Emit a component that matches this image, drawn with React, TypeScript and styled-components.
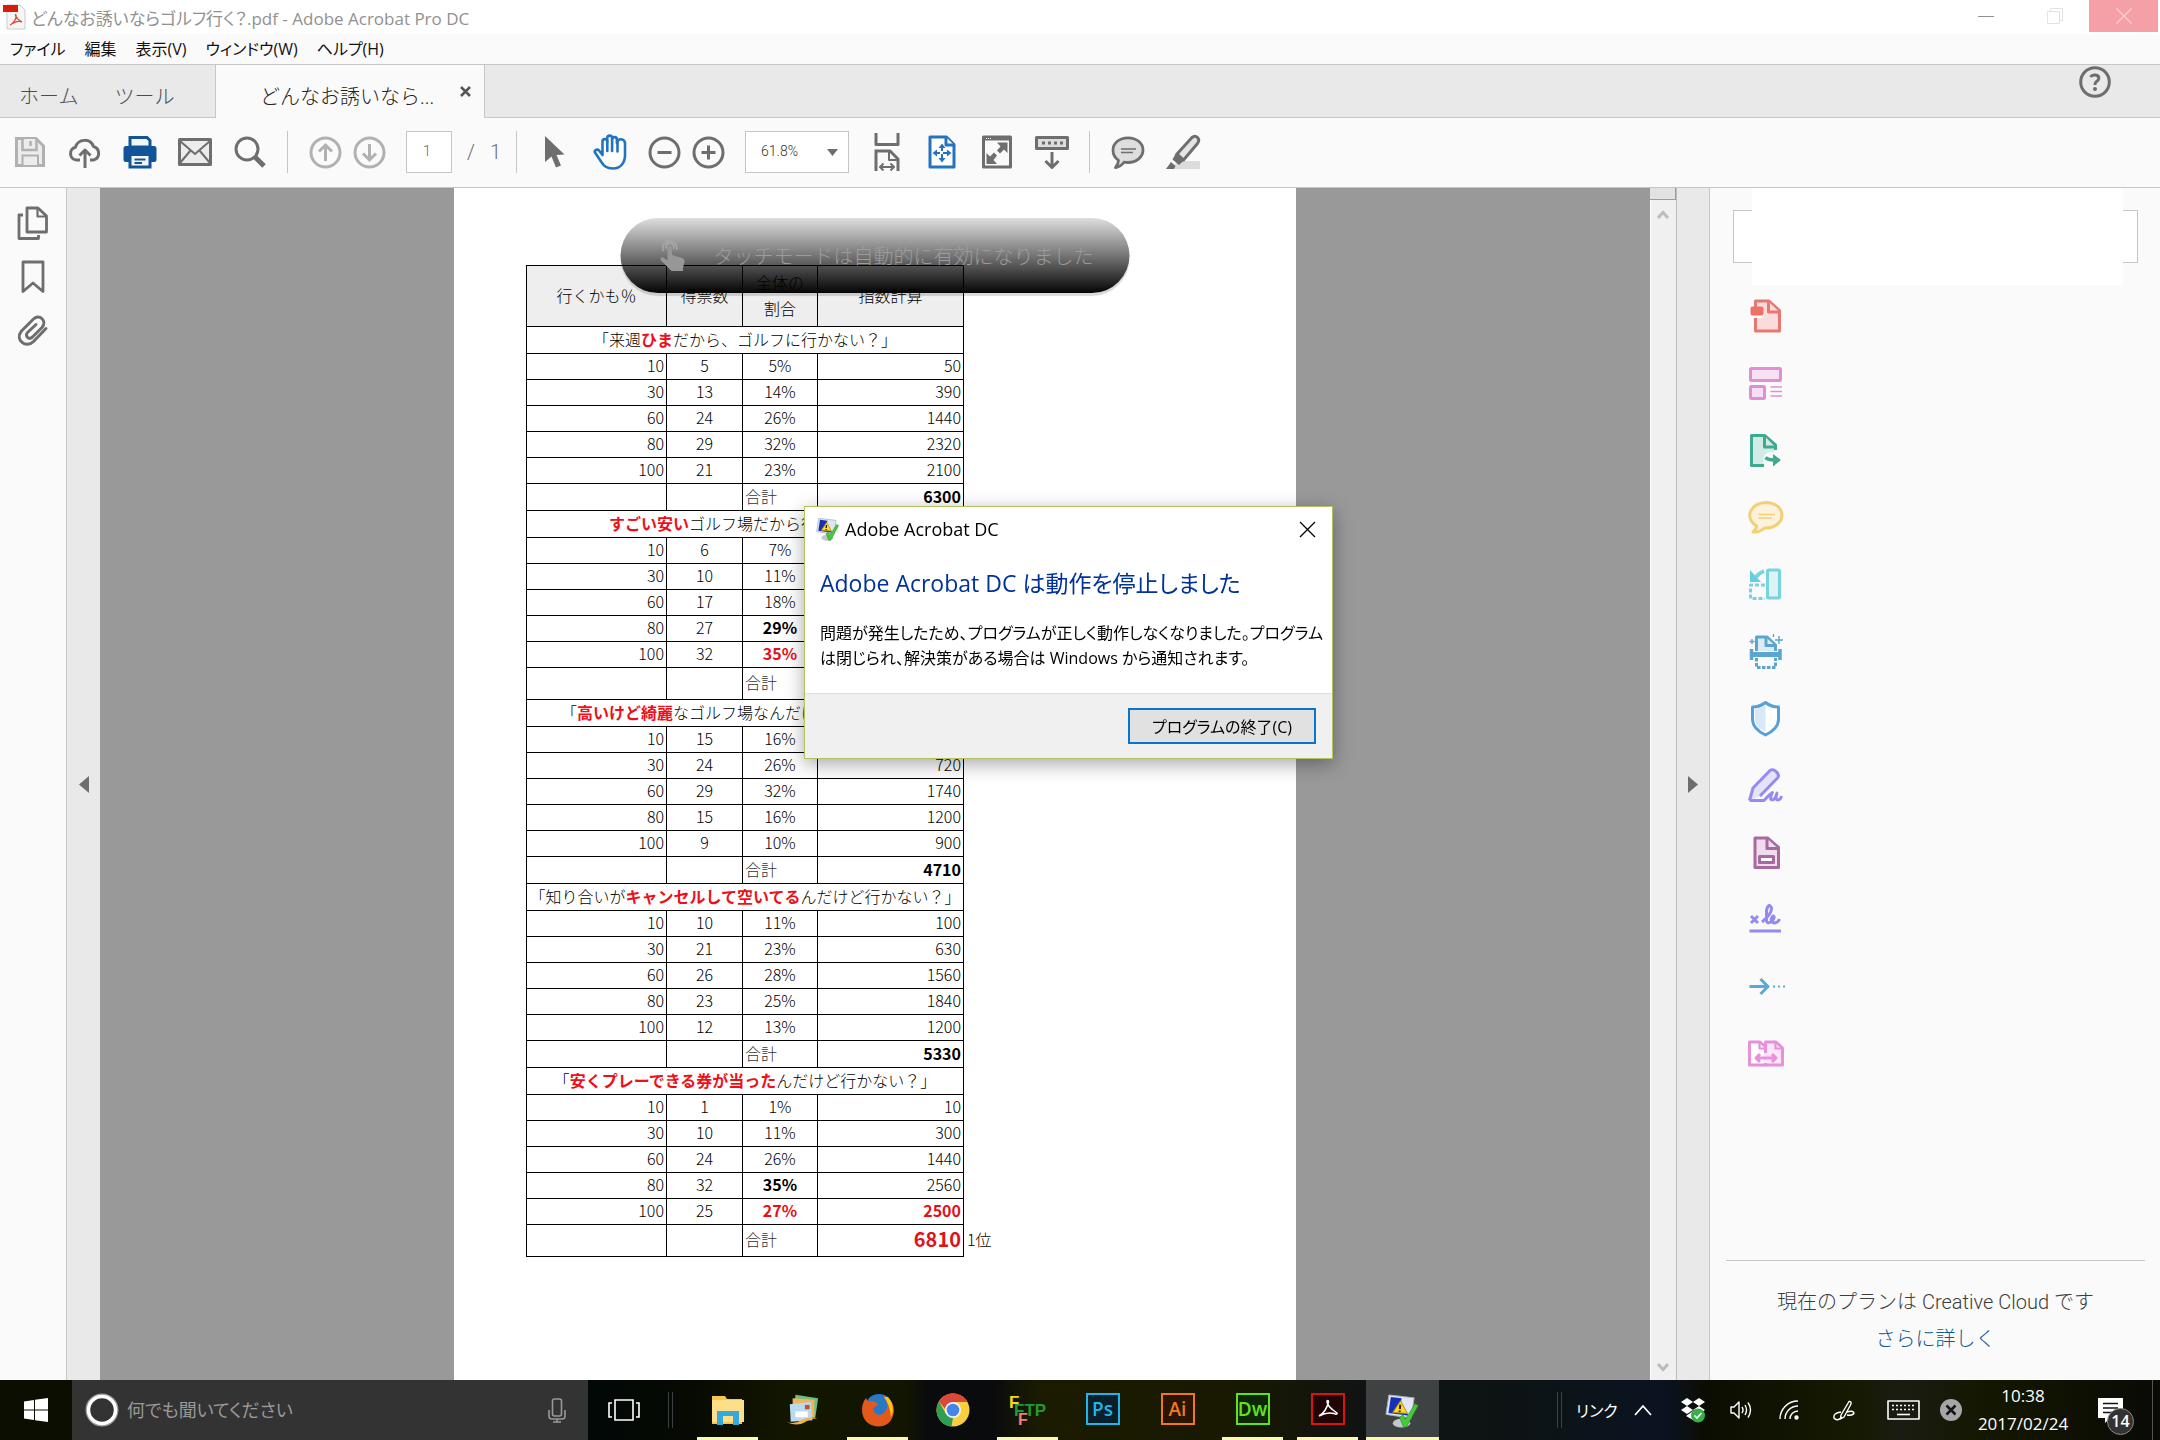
import React from "react";
import styled, { createGlobalStyle, css } from "styled-components";

const UI = `"Open Sans", "Noto Sans CJK JP", sans-serif`;
const JP = `"Noto Sans CJK JP", sans-serif`;
const SANS = `Roboto, "Noto Sans CJK JP", sans-serif`;
const LINE = "#c6c6c6";
const GREY = "#6e6e6e";

const Global = createGlobalStyle`
  *, *::before, *::after { box-sizing: border-box; }
  body { margin: 0; background: #fff; font-family: ${UI}; }
  button, input, select { font: inherit; color: inherit; margin: 0; }
  svg { display: block; flex: none; }
`;

const Desktop = styled.div`
  display: flex;
  flex-direction: column;
  height: 100vh;
  overflow: hidden;
  background: #fafafa;
`;

const BareButton = styled.button`
  display: flex;
  align-items: center;
  justify-content: center;
  padding: 0;
  border: 0;
  background: none;
  cursor: pointer;
`;

/* ---------- window chrome ---------- */

const TitleBar = styled.header`
  display: flex;
  flex: none;
  height: 34px;
  padding: 0 2px 0 3px;
  background: #fff;
  color: #919191;
`;

const TitleText = styled.h1`
  display: flex;
  flex: 1;
  align-items: center;
  gap: 5px;
  margin: 0;
  font-size: 17px;
  font-weight: 400;
  font-feature-settings: "palt";
`;

const WindowButton = styled(BareButton)<{ $close?: boolean }>`
  width: 69px;
  height: 32px;
  background: ${(p) => (p.$close ? "#f5a0a6" : "transparent")};
`;

const MenuBar = styled.nav`
  display: flex;
  flex: none;
  gap: 19px;
  height: 30px;
  padding: 0 10px 2px;
`;

const MenuItem = styled(BareButton)`
  font-size: 16px;
  font-feature-settings: "palt";
  color: #111;
`;

const TabBar = styled.div`
  display: flex;
  flex: none;
  height: 54px;
  border-top: 1px solid ${LINE};
  background: #e9e9e9;
`;

const TabFill = styled.div`
  display: flex;
  flex: 1;
  justify-content: flex-end;
  padding: 1px 49px 0 0;
  border-bottom: 1px solid ${LINE};
`;

const HomeTabs = styled.div`
  display: flex;
  gap: 36px;
  width: 215px;
  padding: 8px 0 0 19px;
  border-bottom: 1px solid ${LINE};
`;

const TabButton = styled(BareButton)`
  font-family: ${SANS};
  font-size: 20px;
  font-weight: 300;
  color: #4b4b4b;
`;

const ActiveTab = styled.div`
  display: flex;
  align-items: center;
  justify-content: space-between;
  width: 270px;
  padding: 0 13px 0 44px;
  border: solid ${LINE};
  border-width: 0 1px;
  background: #fafafa;
`;

const ActiveTabButton = styled(TabButton)`
  padding-top: 8px;
  color: #222;
`;

const TabClose = styled(BareButton)`
  color: #555;
`;

const HelpButton = styled(BareButton)`
  width: 32px;
  height: 32px;
  color: ${GREY};
`;

/* ---------- toolbar ---------- */

const Toolbar = styled.div`
  display: flex;
  flex: none;
  align-items: center;
  height: 70px;
  padding: 0 0 1px 2px;
  border-bottom: 1px solid ${LINE};
  color: ${GREY};
`;

const ToolButton = styled(BareButton)`
  width: 55px;
  height: 42px;
`;

const Pair = styled.div`
  display: flex;
  padding: 0 5px;
  & > button { width: 44px; }
`;

const Divider = styled.span`
  width: 1px;
  height: 42px;
  margin: 0 10px;
  background: ${LINE};
`;

const PageLabel = styled.label`
  display: flex;
  align-items: center;
  gap: 15px;
  width: 100px;
  margin-left: 10px;
  font-family: ${SANS};
  font-size: 20px;
  font-weight: 300;
`;

const PageInput = styled.input`
  flex: none;
  width: 46px;
  height: 42px;
  padding: 0 4px 2px 0;
  border: 1px solid ${LINE};
  background: #fff;
  font-size: 15px;
  text-align: center;
`;

const ZoomBox = styled.div`
  position: relative;
  margin: 0 10px;
`;

const ZoomSelect = styled.select`
  display: block;
  width: 104px;
  height: 42px;
  padding: 0 0 2px 15px;
  border: 1px solid ${LINE};
  border-radius: 0;
  background: #fff;
  appearance: none;
  font-family: ${SANS};
  font-size: 14px;
  font-weight: 300;
  color: #333;
`;

const SelectArrow = styled.svg`
  position: absolute;
  top: 18px;
  right: 11px;
  pointer-events: none;
`;

/* ---------- workspace ---------- */

const Workspace = styled.main`
  display: flex;
  flex: 1;
  min-height: 0;
`;

const Rail = styled.nav`
  display: flex;
  flex: none;
  flex-direction: column;
  width: 67px;
  padding-top: 8px;
  border-right: 1px solid ${LINE};
  color: ${GREY};
  & > button { height: 54px; }
`;

const Splitter = styled(BareButton)<{ $side: "left" | "right" }>`
  flex: none;
  width: 33px;
  background: #e9e9e9;
  ${(p) => p.$side === "right" && css`
    border-right: 1px solid ${LINE};
  `}
`;

const Canvas = styled.section`
  position: relative;
  display: flex;
  flex: 1;
  justify-content: center;
  overflow: hidden;
  background: #999;
`;

const Paper = styled.article`
  width: 842px;
  padding: 77px 72px 0;
  background: #fff;
`;

const ScrollBar = styled.div`
  display: flex;
  flex: none;
  flex-direction: column;
  align-items: center;
  justify-content: space-between;
  width: 27px;
  padding-bottom: 8px;
  border: solid #bdbdbd;
  border-width: 0 1px 0 0;
  box-shadow: inset 1px 0 #fff;
  background: #f0f0f0;
`;

const ScrollTop = styled.div`
  display: flex;
  flex-direction: column;
  align-items: center;
  gap: 10px;
  width: 100%;
`;

const ScrollThumb = styled.div`
  width: 100%;
  height: 12px;
  border: solid #9c9c9c;
  border-width: 0 1px 1px 0;
  background: #e2e2e2;
`;

/* ---------- survey table ---------- */

const Survey = styled.table`
  width: 478px;
  table-layout: fixed;
  border-collapse: collapse;
  font-family: ${JP};
  font-size: 16px;
  font-weight: 300;
  line-height: 20px;
  color: #000;
`;

type CellProps = { $align?: string; $tone?: "bold" | "red" | "mute"; $big?: boolean };

const Row = styled.tr<{ $h: number }>`
  height: ${(p) => p.$h}px;
`;

const Cell = styled.td<CellProps>`
  padding: 0 2px 3px;
  border: 1px solid #000;
  text-align: ${(p) => p.$align ?? "right"};
  white-space: nowrap;
  ${(p) => p.$tone === "bold" && css`font-weight: 700;`}
  ${(p) => p.$tone === "red" && css`font-weight: 700; color: #e11219;`}
  ${(p) => p.$tone === "mute" && css`color: #333;`}
  ${(p) => p.$big && css`font-size: 20px;`}
`;

const HeadCell = styled.th`
  padding: 0 0 3px;
  border: 1px solid #000;
  background: #eee;
  font-weight: 300;
  line-height: 26px;
`;

const Rank = styled.td`
  padding: 0 0 3px 3px;
  white-space: nowrap;
`;

const Hot = styled.strong`
  font-weight: 700;
  color: #ee1018;
`;

/* ---------- toast ---------- */

const Toast = styled.div`
  position: absolute;
  top: 30px;
  left: 50%;
  display: flex;
  align-items: center;
  gap: 28px;
  width: 509px;
  height: 75px;
  padding-left: 39px;
  border-radius: 38px;
  transform: translateX(-50%);
  background: linear-gradient(rgba(0, 0, 0, 0.13), rgba(0, 0, 0, 0.54) 50%, rgba(0, 0, 0, 0.98));
  box-shadow: 0 3px 1px rgba(0, 0, 0, 0.15);
  font-family: ${JP};
  font-size: 20px;
  font-weight: 300;
  color: #9c9c9c;
  white-space: nowrap;
`;

/* ---------- tools pane ---------- */

const ToolsPane = styled.aside`
  display: flex;
  flex: none;
  flex-direction: column;
  width: 450px;
`;

const SearchArea = styled.div`
  position: relative;
  height: 95px;
  padding: 22px 22px 0 23px;
`;

const SearchInput = styled.input`
  display: block;
  width: 100%;
  height: 53px;
  padding: 0 20px;
  border: 1px solid ${LINE};
  background: #fff;
`;

const SearchCover = styled.div`
  position: absolute;
  inset: 0 37px 0 42px;
  height: 97px;
  background: #fff;
`;

const ToolList = styled.nav`
  display: flex;
  flex: 1;
  flex-direction: column;
  align-items: flex-start;
  padding-left: 36px;
`;

const PaneTool = styled(BareButton)`
  width: 40px;
  height: 67px;
`;

const Plan = styled.footer`
  margin: 0 15px 0 16px;
  padding: 23px 0 22px;
  border-top: 1px solid ${LINE};
  font-family: ${SANS};
  font-size: 20px;
  font-weight: 300;
  line-height: 37px;
  text-align: center;
  color: #3c3c3c;
`;

const PlanText = styled.p`
  margin: 0;
`;

const PlanLink = styled.a`
  color: #0a5a92;
  text-decoration: none;
`;

/* ---------- crash dialog ---------- */

const Dialog = styled.section`
  position: fixed;
  top: 506px;
  left: 804px;
  width: 529px;
  border: 1px solid #b3c25a;
  background: #fff;
  box-shadow: 0 5px 18px rgba(0, 0, 0, 0.35);
  color: #000;
`;

const DialogTitle = styled.div`
  display: flex;
  align-items: center;
  gap: 5px;
  height: 44px;
  padding: 0 16px 0 11px;
  font-size: 18px;
  & > button { margin-left: auto; }
`;

const DialogBody = styled.div`
  height: 142px;
  padding: 14px 0 0 15px;
  font-feature-settings: "palt";
`;

const DialogHeading = styled.h2`
  margin: 0 0 20px;
  font-size: 23px;
  font-weight: 400;
  line-height: 36px;
  color: #003399;
`;

const DialogText = styled.p`
  margin: 0;
  font-size: 16px;
  line-height: 25px;
  white-space: nowrap;
`;

const DialogFooter = styled.div`
  display: flex;
  justify-content: flex-end;
  padding: 14px 16px;
  border-top: 1px solid #dfdfdf;
  background: #f0f0f0;
`;

const EndButton = styled.button`
  width: 188px;
  height: 36px;
  padding: 0;
  border: 2px solid #0a74c9;
  background: #e1e1e1;
  font-size: 16px;
  font-feature-settings: "palt";
`;

/* ---------- taskbar ---------- */

const Taskbar = styled.footer`
  display: flex;
  flex: none;
  align-items: stretch;
  height: 60px;
  color: #fff;
  background:
    linear-gradient(90deg, #0b0e00 0, #0b0e00 72px, #020807 600px, #070a02 32%, #121500 36%, #121502 42%, #090b0e 43%, #0a0b0c 46%, #1a1b00 48%, #181900 57%, #101312 63%, #0d1314 70%, #0b1322 77%, #0c0d02 79%, #171a02 86%, #1b1c12 88%, #141700 92%, #0a0a06 100%);
`;

const StartButton = styled(BareButton)`
  width: 72px;
`;

const Cortana = styled.label`
  display: flex;
  align-items: center;
  gap: 8px;
  width: 516px;
  padding: 0 22px 0 13px;
  background: #333;
`;

const CortanaInput = styled.input`
  flex: 1;
  min-width: 0;
  padding: 0;
  border: 0;
  outline: 0;
  background: none;
  font-size: 18px;
  font-feature-settings: "palt";
  &::placeholder { color: #999; opacity: 1; }
`;

const TaskView = styled(BareButton)`
  width: 80px;
  padding-right: 8px;
`;

const Grip = styled.span`
  align-self: center;
  width: 5px;
  height: 36px;
  border: solid #3c4040;
  border-width: 0 1px;
`;

const Apps = styled.div`
  display: flex;
  flex: 1;
  gap: 2px;
  padding-left: 18px;
`;

const AppButton = styled(BareButton)<{ $state?: "open" | "active" }>`
  position: relative;
  width: 73px;
  background: ${(p) => (p.$state === "active" ? "#3f4242" : "none")};
  &::after {
    content: "";
    position: absolute;
    right: ${(p) => (p.$state === "active" ? 0 : 6)}px;
    bottom: 0;
    left: ${(p) => (p.$state === "active" ? 0 : 6)}px;
    height: ${(p) => (p.$state ? 3 : 0)}px;
    background: #fbf8b0;
  }
`;

const Brand = styled.span<{ $c: string; $bg: string }>`
  display: grid;
  place-items: center;
  width: 34px;
  height: 32px;
  margin-bottom: 3px;
  border: 2px solid ${(p) => p.$c};
  background: ${(p) => p.$bg};
  font-size: 19px;
  font-weight: 600;
  line-height: 24px;
  color: ${(p) => p.$c};
`;

const Tray = styled.div`
  display: flex;
  align-items: center;
  font-size: 17px;
`;

const TrayLabel = styled.span`
  width: 56px;
  padding-left: 14px;
  font-size: 16px;
  font-feature-settings: "palt";
`;

const TrayButton = styled(BareButton)<{ $w?: number }>`
  width: ${(p) => p.$w ?? 50}px;
  height: 60px;
  color: #fff;
`;

const Clock = styled.time`
  width: 106px;
  line-height: 28px;
  text-align: center;
`;

const Notice = styled(BareButton)`
  position: relative;
  width: 77px;
  height: 60px;
  padding-right: 7px;
  border-right: 1px solid #555;
  margin-right: 7px;
  color: #fff;
`;

const Badge = styled.span`
  position: absolute;
  top: 28px;
  left: 31px;
  width: 27px;
  height: 27px;
  border: 1px solid #8a8a8a;
  border-radius: 50%;
  background: #333;
  font-size: 16px;
  font-weight: 600;
  line-height: 25px;
`;

/* ---------- drawings ---------- */

type GProps = { w: number; h: number; sw?: number; children: React.ReactNode };
const G = ({ w, h, sw = 3, children }: GProps) => (
  <svg width={w} height={h} viewBox={`0 0 ${w} ${h}`} fill="none" stroke="currentColor" strokeWidth={sw} strokeLinejoin="round" aria-hidden="true">
    {children}
  </svg>
);

const SaveIcon = () => (
  <svg width={32} height={32} viewBox="0 0 32 32" fill="#ececec" stroke="#b1b1b1" strokeWidth={3} aria-hidden="true">
    <path d="M2.500 2.500H22L29.500 10V29.500H2.500Z" />
    <path d="M8.500 3V14H22.500V3M16.500 5V10" strokeWidth={2.500} />
    <path d="M8.500 29V19.500H24V29" strokeWidth={2} />
  </svg>
);
const CloudIcon = () => (
  <G w={34} h={34}>
    <path d="M12 25H8.500A6.500 6.500 0 0 1 7.500 12.200A9.500 9.500 0 0 1 25.500 11.500A7 7 0 0 1 25.500 25H22" />
    <path d="M17 33V16M11.500 20.500L17 15L22.500 20.500" />
  </G>
);
const PrintIcon = () => (
  <svg width={34} height={34} viewBox="0 0 34 34" aria-hidden="true">
    <rect x="0.500" y="11" width="33" height="16" rx="2.500" fill="#12549a" />
    <path d="M7 12V2.500H24L27 5.500V12Z" fill="#f2f6fb" stroke="#12549a" strokeWidth={3} />
    <rect x="7" y="19.500" width="20" height="12.500" fill="#f2f6fb" stroke="#12549a" strokeWidth={3} />
    <path d="M11.500 24.500H22.500M11.500 28H19" stroke="#12549a" strokeWidth={2} />
  </svg>
);
const MailIcon = () => (
  <G w={34} h={28} sw={2.500}>
    <rect x="1.500" y="1.500" width="31" height="25" strokeWidth={3} fill="#ececec" />
    <path d="M2 3L17 16L32 3M2 25L12.500 12.500M32 25L21.500 12.500" strokeWidth={2} />
  </G>
);
const FindIcon = () => (
  <G w={32} h={32} sw={3}>
    <circle cx="13" cy="13" r="11" />
    <path d="M21 21L30 30" strokeWidth={5} />
  </G>
);
const RoundIcon = ({ kind }: { kind: "up" | "down" | "minus" | "plus" }) => (
  <svg width={33} height={33} viewBox="0 0 33 33" fill="none" stroke={kind === "up" || kind === "down" ? "#b1b1b1" : GREY} strokeWidth={3} aria-hidden="true">
    <circle cx="16.500" cy="16.500" r="14.500" />
    {kind === "up" && <path d="M16.500 25V9.500M10 15.500L16.500 9L23 15.500" />}
    {kind === "down" && <path d="M16.500 8V23.500M10 17.500L16.500 24L23 17.500" />}
    {(kind === "minus" || kind === "plus") && <path d="M9.500 16.500H23.500" />}
    {kind === "plus" && <path d="M16.500 9.500V23.500" />}
  </svg>
);
const CursorIcon = () => (
  <svg width={22} height={32} viewBox="0 0 22 32" aria-hidden="true">
    <path d="M1 0V26L7.500 20.500L12 31.500L17 29.500L12.500 19L20.500 18.500Z" fill={GREY} />
  </svg>
);
const HandIcon = () => (
  <svg width={34} height={36} viewBox="0 0 34 36" fill="#fff" stroke="#2473bf" strokeWidth={2.600} strokeLinecap="round" strokeLinejoin="round" aria-hidden="true">
    <path d="M9.500 21V7.500A2.400 2.400 0 0 1 14.300 7.500V4A2.400 2.400 0 0 1 19.100 4V5.500A2.400 2.400 0 0 1 23.900 5.500V9A2.400 2.400 0 0 1 32 9.500V21C32 29 27.500 34.500 20 34.500C13 34.500 10.500 31.500 8 27.500L2 18.500C1 16.500 4 14.500 6 16.500L9.500 21Z" />
    <path d="M14.300 7.500V17M19.100 5V17M24.500 8V17.500" />
  </svg>
);
const WidthIcon = () => (
  <G w={28} h={38} sw={3}>
    <path d="M3 0V11.500H25V0" />
    <path d="M3 38V18H17L25 26V38" strokeLinejoin="miter" />
    <path d="M16 18V27H25" strokeWidth={2} />
    <path d="M7 34H21M10.500 30.500L7 34L10.500 37.500M17.500 30.500L21 34L17.500 37.500" strokeWidth={2} />
  </G>
);
const FitIcon = () => (
  <svg width={28} height={34} viewBox="0 0 28 34" fill="#fff" stroke="#2473bf" strokeWidth={3} strokeLinejoin="round" aria-hidden="true">
    <path d="M2 2H18.500L26 9.500V32H2Z" />
    <path d="M18 2V10H26" />
    <path d="M14 10V26M6 18H22" strokeWidth={2} strokeDasharray="6 3" />
    <path d="M10.500 13L14 8.500L17.500 13ZM10.500 23L14 27.500L17.500 23ZM9 14.500L4.500 18L9 21.500ZM19 14.500L23.500 18L19 21.500Z" fill="#2473bf" stroke="none" />
  </svg>
);
const FullIcon = () => (
  <G w={30} h={34} sw={3}>
    <rect x="1.500" y="2" width="27" height="30" />
    <path d="M2 4H28" strokeWidth={3} />
    <path d="M4 3.500H10" stroke="#fff" strokeWidth={1} strokeDasharray="1 1" />
    <path d="M15 7.500H25.500V18L22 14.500L18 18.500L15 15.500L18.500 11.500ZM15 29H4.500V18L8 21.500L12 17.500L15 20.500L11.500 25Z" fill="currentColor" stroke="none" />
  </G>
);
const KeysIcon = () => (
  <G w={34} h={34} sw={3}>
    <rect x="1.500" y="2.500" width="31" height="11" fill="#ddd" />
    <path d="M7 8H28" strokeDasharray="3 3" />
    <path d="M17 17V32M10.500 26L17 32.500L23.500 26" />
  </G>
);
const NoteIcon = ({ c, fill, w, h }: { c: string; fill: string; w: number; h: number }) => (
  <svg width={w} height={h} viewBox="0 0 34 33" fill={fill} stroke={c} strokeWidth={2.800} strokeLinejoin="round" aria-hidden="true">
    <path d="M17 1.800C25.500 1.800 32 7 32 14C32 21 25.500 26.500 17 26.500Q14.500 26.500 13 26.200Q9.500 31 4.500 31.500Q7.500 28 7.500 24.300C4 22 2 18.500 2 14C2 7 8.500 1.800 17 1.800Z" />
    <path d="M10 13H25M10 16.500H22" strokeWidth={1.600} />
  </svg>
);
const MarkerIcon = () => (
  <G w={36} h={36} sw={3}>
    <path d="M12 27H35V35H8Z" fill="#dcdcdc" stroke="none" />
    <path d="M12 20L27 3.500Q30 1 32.500 3.500Q35 6 32.500 9.500L18.500 26Z" fill="#e4e4e4" />
    <path d="M11 19L19.500 26L14 31L7.500 25.500Z" fill="currentColor" stroke="none" />
    <path d="M6 28L10.500 32L9 35H1Z" fill="currentColor" stroke="none" />
  </G>
);
const HelpIcon = () => (
  <G w={32} h={32} sw={3}>
    <circle cx="16" cy="16" r="14.300" />
    <path d="M11.500 11Q13 8.500 16.500 9Q20 9.500 19.800 12.500Q19.500 14.500 17 16Q16 17 16 19" />
    <circle cx="16" cy="23" r="2" fill="currentColor" stroke="none" />
  </G>
);
const PagesIcon = () => (
  <G w={32} h={34} sw={2.800}>
    <path d="M10 2H21L29.500 10V26H10Z" />
    <path d="M20.500 2.500V10.500H29" strokeWidth={2.200} />
    <path d="M6 9H2V32.500H21.500V29" />
  </G>
);
const BookmarkIcon = () => (
  <G w={24} h={34} sw={2.800}><path d="M2 2H22V31.500L12 23L2 31.500Z" /></G>
);
const ClipIcon = () => (
  <G w={32} h={32} sw={3}>
    <path strokeLinecap="round" d="M29 13.500L16.500 26.500C9 34 -2.500 25 4.500 16L16.500 4C22.500 -1.500 30.500 6 25 12.500L15.500 22C11.500 25.500 7.500 20.500 10.500 17.500L19 9.500" />
  </G>
);
const PdfIcon = () => (
  <svg width={23} height={26} viewBox="0 0 23 26" aria-hidden="true">
    <path d="M4 1H17L22 6V25H4Z" fill="#f6f6f6" stroke="#ccc" />
    <rect x="0" y="1" width="15" height="7" fill="#d81b0b" />
    <path d="M7 21C11 19 14 14 13 11C12 9 11.500 14 19 18C16 16.500 12 17.500 7 21Z" fill="none" stroke="#e0483c" strokeWidth={1.300} />
  </svg>
);
const CrossIcon = ({ s, w = 1.200 }: { s: number; w?: number }) => (
  <G w={s} h={s} sw={w}><path d={`M1 1L${s - 1} ${s - 1}M${s - 1} 1L1 ${s - 1}`} /></G>
);
const Chevron = ({ up }: { up?: boolean }) => (
  <svg width={12} height={9} viewBox="0 0 12 9" fill="none" stroke="#bdbdbd" strokeWidth={3} aria-hidden="true">
    <path d={up ? "M1 8L6 2.500L11 8" : "M1 1L6 6.500L11 1"} />
  </svg>
);
const FaultIcon = ({ size }: { size: number }) => (
  <svg width={size} height={size} viewBox="0 0 36 36" aria-hidden="true">
    <ellipse cx="17" cy="31" rx="9" ry="4.500" fill="#c3c8cc" />
    <path d="M4 2L30 5L27 26L1 22Z" fill="#dfe5f4" stroke="#aab" />
    <path d="M6 4L17 5.500Q14 14 25 23.500L3.500 20.500Z" fill="#1431b8" />
    <path d="M16 8L23 21L8 20Z" fill="#ffd928" stroke="#b58a00" />
    <path d="M15.700 12L15.300 16.500M15.100 18V19.500" stroke="#222" strokeWidth={2} />
    <path d="M15 25L18.500 22.500L21 27L31 11L34 13L22 35H19Z" fill="#49c83c" stroke="#2c9426" strokeWidth={0.700} />
  </svg>
);
const TouchIcon = () => (
  <svg width={26} height={33} viewBox="0 0 26 33" fill="none" stroke="#a8a8a8" strokeWidth={1.500} aria-hidden="true">
    <path d="M4 12A7 7 0 1 1 17 11M7 10A4 4 0 1 1 14 10" />
    <path d="M8 8Q10 5 12.500 8V16L23 19Q25.500 20 25 23L23.500 29V32H12L1 21Q1 17.500 4 18.500L8 21.500Z" fill="#979797" stroke="none" />
  </svg>
);

const paneIcons: { name: string; draw: React.ReactNode; c: string; f: string }[] = [
  { name: "PDFを作成", c: "#e6796f", f: "#fbdcdc", draw: (
    <><path d="M8.500 19V3H22L32.500 12.500V33H8.500V20" /><path d="M21.500 3.500V14H32" /><path d="M8 16H17V20H6V16" fill="#fff" stroke="none" /><rect x="4.500" y="9.500" width="11" height="7" rx="1" fill="#ee7066" stroke="#ee7066" strokeWidth={2} /></>) },
  { name: "PDFを編集", c: "#e18ed8", f: "#f6e0f4", draw: (
    <><rect x="3.500" y="3.500" width="30" height="12" rx="1" /><rect x="3.500" y="21.500" width="14" height="12" rx="1" /><path d="M23.500 22H35M23.500 26.500H35M23.500 31H35" strokeWidth={1.300} /></>) },
  { name: "PDFを書き出し", c: "#3dab90", f: "#d2ebe6", draw: (
    <><path d="M17 33.500H4.500V3.500H17.500L28.500 13V18" /><path d="M17.500 4V15H28" /><circle cx="24" cy="28" r="8" fill="#fafafa" stroke="none" /><path d="M18.500 25.500Q21 28 27 28" strokeWidth={3.500} /><path d="M26 22L34 28L26 34.500Z" fill="#3dab90" stroke="none" /></>) },
  { name: "注釈", c: "#f3cf73", f: "#fbf1dc", draw: (
    <><path d="M18.500 3.500C28 3.500 35 9 35 16C35 24 27 29.500 17.500 29Q13 33.500 6 33Q10 29 9.500 27C-4 18 5 3.500 18.500 3.500Z" /><path d="M11.500 15.500H28M11.500 19H25" strokeWidth={1.500} /></>) },
  { name: "ページを整理", c: "#78d3df", f: "#dcf3f6", draw: (
    <><rect x="20.500" y="4" width="12" height="28" rx="1" /><path d="M18 19H3.500V32.500H18" fill="none" strokeDasharray="4 2" /><path d="M17 5Q12 7 9 11" strokeWidth={4} /><path d="M3 4V16H14Z" fill="#62d0e0" stroke="none" /></>) },
  { name: "スキャン補正", c: "#5aa6cf", f: "#dcebf6", draw: (
    <><path d="M9.500 18V4H20L28.500 12V18" /><path d="M19 4.500V12.500H28" /><rect x="3" y="19" width="31" height="5" fill="#5aa6cf" stroke="none" /><path d="M4.500 16V27M33 16V27" strokeWidth={3.500} /><path d="M9.500 25V34.500H28.500V25" fill="none" strokeDasharray="3.500 1.500" /><path d="M5 6V11M2.500 8.500H7.500M32 3V11M28 7H36M26.500 1V4" strokeWidth={1.400} /></>) },
  { name: "保護", c: "#569fd9", f: "#fff", draw: (
    <><path d="M18.500 2.500Q24 7 31.500 7V20Q31 29 18.500 35Q6 29 5.500 20V7Q13 7 18.500 2.500Z" /><path d="M18.500 5Q14 8.500 8 8.500V20Q8.500 27 18.500 32Z" fill="#d9e8f7" stroke="none" /></>) },
  { name: "入力と署名", c: "#938af2", f: "#e4e3fb", draw: (
    <><path d="M2.500 33.500L6 21L23 3.500Q26 1.500 29 4.500Q33 8 30.500 11L13 29" /><path d="M2.500 33.500H17Q22 28 25.500 25.500Q22 33 25 33Q28 33 30 26Q28 33 31 33Q34 32.500 34.500 29" fill="none" strokeWidth={2.800} /></>) },
  { name: "フォームを準備", c: "#a8699f", f: "#efdcec", draw: (
    <><path d="M8 4H20.500L31.500 13.500V33.500H8Z" /><path d="M20 4.500V14.500H31" /><rect x="12.500" y="22.500" width="14" height="6" fill="#fff" /></>) },
  { name: "署名用に送信", c: "#938af2", f: "none", draw: (
    <><path d="M4 15L11 22M11 15L4 22M15 21Q25 13 24.500 7Q22 1 19.500 9V20Q20 23 24 21Q29 16 26 15Q22 20 27 22Q31 22 32.500 18M2.500 30H34" /></>) },
  { name: "送信とトラック", c: "#5aa9d0", f: "none", draw: (
    <><path d="M2.500 18.500H20M13.500 11L21 18.500L13.500 26" /><path d="M26 18.500H38" strokeDasharray="2 3" strokeWidth={2} /></>) },
  { name: "ファイルを比較", c: "#e790dc", f: "#fce6f8", draw: (
    <><path d="M2.500 7H13L18.500 12V30H2.500Z" fill="#fff" /><path d="M18.500 7H29L35.500 13V30H18.500Z" /><path d="M12.500 7V13.500H18M28.500 7V13.500H35" fill="none" strokeWidth={2.200} /><path d="M18.500 18V28" stroke="#fce6f8" strokeWidth={4} /><path d="M10 23H27M13 19L9 23L13 27M25 19L29 23L25 27" fill="none" /></>) },
];

/* ---------- data ---------- */

type Tone = "bold" | "red";
type Section = {
  title: [string, string, string];
  rows: [number, string, number, Tone?, Tone?][];
  total: string;
  tall?: boolean;
};
const levels = [10, 30, 60, 80, 100];
const sections: Section[] = [
  { title: ["「来週", "ひま", "だから、ゴルフに行かない？」"], total: "6300",
    rows: [[5, "5%", 50], [13, "14%", 390], [24, "26%", 1440], [29, "32%", 2320], [21, "23%", 2100]] },
  { title: ["", "すごい安い", "ゴルフ場だから行かない？"], total: "6740", tall: true,
    rows: [[6, "7%", 60], [10, "11%", 300], [17, "18%", 1020], [27, "29%", 2160, "bold"], [32, "35%", 3200, "red"]] },
  { title: ["「", "高いけど綺麗", "なゴルフ場なんだけど行かない？」"], total: "4710",
    rows: [[15, "16%", 150], [24, "26%", 720], [29, "32%", 1740], [15, "16%", 1200], [9, "10%", 900]] },
  { title: ["「知り合いが", "キャンセルして空いてる", "んだけど行かない？」"], total: "5330",
    rows: [[10, "11%", 100], [21, "23%", 630], [26, "28%", 1560], [23, "25%", 1840], [12, "13%", 1200]] },
  { title: ["「", "安くプレーできる券が当った", "んだけど行かない？」"], total: "6810", tall: true,
    rows: [[1, "1%", 10], [10, "11%", 300], [24, "26%", 1440], [32, "35%", 2560, "bold"], [25, "27%", 2500, "red", "red"]] },
];

const SurveyTable = () => (
  <Survey>
    <colgroup>
      {[140, 76, 75, 146, 41].map((w, i) => <col key={i} width={w} />)}
    </colgroup>
    <thead>
      <Row $h={61}>
        <HeadCell>行くかも％</HeadCell>
        <HeadCell>得票数</HeadCell>
        <HeadCell>全体の<br />割合</HeadCell>
        <HeadCell>指数計算</HeadCell>
      </Row>
    </thead>
    {sections.map((s, n) => {
      const last = n === sections.length - 1;
      return (
        <tbody key={n}>
          <Row $h={27}>
            <Cell colSpan={4} $align="center">{s.title[0]}<Hot>{s.title[1]}</Hot>{s.title[2]}</Cell>
          </Row>
          {s.rows.map(([votes, share, score, tone, scoreTone], i) => (
            <Row $h={26} key={i}>
              <Cell>{levels[i]}</Cell>
              <Cell $align="center">{votes}</Cell>
              <Cell $align="center" $tone={tone}>{share}</Cell>
              <Cell $tone={scoreTone}>{score}</Cell>
            </Row>
          ))}
          <Row $h={s.tall ? 32 : 27}>
            <Cell /><Cell />
            <Cell $align="left" $tone="mute">合計</Cell>
            <Cell $tone={last ? "red" : "bold"} $big={last}>{s.total}</Cell>
            {last && <Rank>1位</Rank>}
          </Row>
        </tbody>
      );
    })}
  </Survey>
);

const apps: { name: string; state?: "open" | "active"; icon: React.ReactNode }[] = [
  { name: "エクスプローラー", state: "open", icon: (
    <svg width={34} height={32} viewBox="0 0 34 32"><path d="M1 2H14L16 5H31V30H1Z" fill="#f5c64f" /><path d="M1 6H33V28H1Z" fill="#fddf8a" /><path d="M6 31V17H28V31H22V22H12V31Z" fill="#36a9dc" /></svg>) },
  { name: "Live メール", icon: (
    <svg width={34} height={32} viewBox="0 0 36 44" preserveAspectRatio="none"><path d="M10 1L34 6L31 33L8 28Z" fill="#6cbf80" /><path d="M7 6L30 8V32H7Z" fill="#f0b45e" /><path d="M4 14L26 11L28 36L5 38Z" fill="#b9d9f1" /><rect x="10" y="24" width="13" height="8" fill="#fff" /><rect x="20" y="15" width="5" height="6" fill="#c0522a" /><path d="M1 39Q10 42 16 36Q24 30 34 34Q26 33 20 39Q12 45 1 39Z" fill="#f3b344" /></svg>) },
  { name: "Firefox", state: "open", icon: (
    <svg width={34} height={34} viewBox="0 0 34 34"><circle cx="18" cy="15" r="14" fill="#2a78c4" /><path d="M22 2Q33 7 33 18C32 29 25 33.500 17 33.500C7 33 1 26 1 17Q1 10 5 5L7 9Q10 7 14 9Q17 10 17 12L12 15Q12 20 17 22Q24 22 26 15Q27 8 22 2Z" fill="#e3591b" /><path d="M27 4Q35 14 30 24Q29 12 23 4Z" fill="#fbc31c" /></svg>) },
  { name: "Chrome", icon: (
    <svg width={34} height={34} viewBox="0 0 34 34"><circle cx="17" cy="17" r="16.500" fill="#fbcf3b" /><path d="M17 17L3 8.500A16.500 16.500 0 0 1 31.500 9H17Z" fill="#d9483b" /><path d="M3 8.500L10 21L17 24.500L15.500 33.500A16.500 16.500 0 0 1 3 8.500Z" fill="#2f9e55" /><path d="M3 8.500Q10 0 17 0.500Q27 1 31.500 9H17L10 17Z" fill="#d9483b" /><circle cx="17" cy="17" r="8" fill="#f5f5f5" /><circle cx="17" cy="17" r="6.300" fill="#4684ea" /></svg>) },
  { name: "FFFTP", state: "open", icon: (
    <svg width={48} height={48} viewBox="0 0 48 48" fontFamily="Liberation Sans" fontWeight={700}><text x="5" y="22" fontSize="17" fill="#f5d91b">F</text><text x="10" y="30" fontSize="17" fill="#1f9a2c">FTP</text><text x="14" y="39" fontSize="16" fill="#f37c7c">F</text></svg>) },
  { name: "Photoshop", icon: <Brand $c="#22b5ea" $bg="#07202c">Ps</Brand> },
  { name: "Illustrator", icon: <Brand $c="#f0791a" $bg="#2a1503">Ai</Brand> },
  { name: "Dreamweaver", state: "open", icon: <Brand $c="#62e21f" $bg="#0d2603">Dw</Brand> },
  { name: "Acrobat", state: "open", icon: (
    <Brand $c="#d81414" $bg="#210404"><svg width={22} height={22} viewBox="0 0 22 22" fill="none" stroke="#fff" strokeWidth={1.500}><path d="M2 18Q9 14 11.500 4Q11.500 1.500 10 3Q9.500 8 20 15Q20.500 17 17 15.500Q10 13.500 2 18Z" /></svg></Brand>) },
  { name: "問題の報告", state: "active", icon: <FaultIcon size={35} /> },
];

const App = () => (
  <Desktop>
    <Global />
    <TitleBar>
      <TitleText><PdfIcon />どんなお誘いならゴルフ行く？.pdf - Adobe Acrobat Pro DC</TitleText>
      <WindowButton aria-label="最小化"><G w={16} h={16} sw={1}><path d="M0 8.500H16" /></G></WindowButton>
      <WindowButton aria-label="元に戻す">
        <svg width={16} height={16} viewBox="0 0 16 16" fill="none" stroke="#e2e2e2"><path d="M0.500 3.500H12.500V15.500H0.500ZM3.500 3V0.500H15.500V12.500H13" /></svg>
      </WindowButton>
      <WindowButton $close aria-label="閉じる">
        <svg width={16} height={16} viewBox="0 0 16 16" stroke="#fccfd2" strokeWidth={1.300}><path d="M0.500 0.500L15.500 15.500M15.500 0.500L0.500 15.500" /></svg>
      </WindowButton>
    </TitleBar>
    <MenuBar>
      {["ファイル", "編集", "表示(V)", "ウィンドウ(W)", "ヘルプ(H)"].map((m) => <MenuItem key={m}>{m}</MenuItem>)}
    </MenuBar>
    <TabBar>
      <HomeTabs><TabButton>ホーム</TabButton><TabButton>ツール</TabButton></HomeTabs>
      <ActiveTab>
        <ActiveTabButton>どんなお誘いなら...</ActiveTabButton>
        <TabClose aria-label="タブを閉じる"><CrossIcon s={11} w={2.500} /></TabClose>
      </ActiveTab>
      <TabFill><HelpButton aria-label="ヘルプ"><HelpIcon /></HelpButton></TabFill>
    </TabBar>
    <Toolbar>
      <ToolButton aria-label="保存"><SaveIcon /></ToolButton>
      <ToolButton aria-label="アップロード"><CloudIcon /></ToolButton>
      <ToolButton aria-label="印刷"><PrintIcon /></ToolButton>
      <ToolButton aria-label="メール"><MailIcon /></ToolButton>
      <ToolButton aria-label="検索"><FindIcon /></ToolButton>
      <Divider />
      <Pair>
        <ToolButton aria-label="前のページ"><RoundIcon kind="up" /></ToolButton>
        <ToolButton aria-label="次のページ"><RoundIcon kind="down" /></ToolButton>
      </Pair>
      <PageLabel><PageInput aria-label="ページ" defaultValue="1" /><span>/</span><span>1</span></PageLabel>
      <Divider />
      <ToolButton aria-label="選択"><CursorIcon /></ToolButton>
      <ToolButton aria-label="手のひら"><HandIcon /></ToolButton>
      <Pair>
        <ToolButton aria-label="縮小"><RoundIcon kind="minus" /></ToolButton>
        <ToolButton aria-label="拡大"><RoundIcon kind="plus" /></ToolButton>
      </Pair>
      <ZoomBox>
        <ZoomSelect aria-label="倍率"><option>61.8%</option></ZoomSelect>
        <SelectArrow width={11} height={7} viewBox="0 0 11 7"><path d="M0 0H11L5.500 7Z" fill={GREY} /></SelectArrow>
      </ZoomBox>
      <ToolButton aria-label="幅に合わせる"><WidthIcon /></ToolButton>
      <ToolButton aria-label="全体表示"><FitIcon /></ToolButton>
      <ToolButton aria-label="フルスクリーン"><FullIcon /></ToolButton>
      <ToolButton aria-label="ツールバーを隠す"><KeysIcon /></ToolButton>
      <Divider />
      <ToolButton aria-label="ノート注釈"><NoteIcon c={GREY} fill="#dedede" w={34} h={33} /></ToolButton>
      <ToolButton aria-label="ハイライト"><MarkerIcon /></ToolButton>
    </Toolbar>

    <Workspace>
      <Rail>
        <BareButton aria-label="サムネール"><PagesIcon /></BareButton>
        <BareButton aria-label="しおり"><BookmarkIcon /></BareButton>
        <BareButton aria-label="添付"><ClipIcon /></BareButton>
      </Rail>
      <Splitter $side="left" aria-label="左を開く">
        <svg width={10} height={17} viewBox="0 0 10 17"><path d="M10 0V17L0 8.500Z" fill={GREY} /></svg>
      </Splitter>
      <Canvas>
        <Paper><SurveyTable /></Paper>
        <Toast role="status"><TouchIcon />タッチモードは自動的に有効になりました</Toast>
      </Canvas>
      <ScrollBar>
        <ScrollTop><ScrollThumb /><Chevron up /></ScrollTop>
        <Chevron />
      </ScrollBar>
      <Splitter $side="right" aria-label="右を閉じる">
        <svg width={10} height={17} viewBox="0 0 10 17"><path d="M0 0V17L10 8.500Z" fill={GREY} /></svg>
      </Splitter>
      <ToolsPane>
        <SearchArea><SearchInput aria-label="ツールを検索" /><SearchCover /></SearchArea>
        <ToolList>
          {paneIcons.map((t) => (
            <PaneTool key={t.name} aria-label={t.name}>
              <svg width={38} height={37} viewBox="0 0 38 37" fill={t.f} stroke={t.c} strokeWidth={3} strokeLinejoin="round">{t.draw}</svg>
            </PaneTool>
          ))}
        </ToolList>
        <Plan>
          <PlanText>現在のプランは Creative Cloud です</PlanText>
          <PlanLink href="#">さらに詳しく</PlanLink>
        </Plan>
      </ToolsPane>
    </Workspace>

    <Taskbar>
      <StartButton aria-label="スタート">
        <svg width={24} height={24} viewBox="0 0 24 24" fill="#fff"><path d="M0 3.500L10 2V11.500H0ZM11 1.800L24 0V11.500H11ZM0 12.500H10V22L0 20.500ZM11 12.500H24V24L11 22.200Z" /></svg>
      </StartButton>
      <Cortana>
        <svg width={34} height={34} viewBox="0 0 34 34" fill="none"><circle cx="17" cy="17" r="15.500" stroke="#9a9a9a" strokeWidth={2} /><circle cx="17" cy="17" r="13.500" stroke="#fff" strokeWidth={3.500} /></svg>
        <CortanaInput aria-label="検索" placeholder="何でも聞いてください" />
        <svg width={18} height={25} viewBox="0 0 18 25" fill="none" stroke="#9a9a9a" strokeWidth={1.600}><rect x="4.500" y="1" width="9" height="17" rx="2" /><path d="M1 12V18Q1 21 4 21H14Q17 21 17 18V12M9 21V24M5 24H13" /></svg>
      </Cortana>
      <TaskView aria-label="タスクビュー">
        <svg width={32} height={22} viewBox="0 0 32 22" fill="none" stroke="#fff" strokeWidth={1.600}><path d="M7 1H25V21H7ZM4 4H1V18H4M28 4H31V18H28" /></svg>
      </TaskView>
      <Grip />
      <Apps>
        {apps.map((a) => <AppButton key={a.name} aria-label={a.name} $state={a.state}>{a.icon}</AppButton>)}
      </Apps>
      <Tray>
        <Grip />
        <TrayLabel>リンク</TrayLabel>
        <TrayButton aria-label="隠れているインジケーター"><G w={18} h={12} sw={1.800}><path d="M1 11L9 2L17 11" /></G></TrayButton>
        <TrayButton aria-label="Dropbox">
          <svg width={25} height={25} viewBox="0 0 25 25" fill="#fff"><path d="M6 0L12 4L6 8L0 4ZM18 0L24 4L18 8L12 4ZM6 8L12 12L6 16L0 12ZM18 8L24 12L18 16L12 12ZM12 13L17 17L12 22L5 18Z" /><circle cx="17" cy="17.500" r="7" fill="#3aae49" /><path d="M13.500 17.500L16 20L20.500 15" fill="none" stroke="#fff" strokeWidth={1.600} /></svg>
        </TrayButton>
        <TrayButton $w={46} aria-label="音量"><G w={23} h={20} sw={1.400}><path d="M1 7H4L9 2V18L4 13H1ZM12 7Q14 10 12 13M15 5Q18 10 15 15M18 2.500Q23 10 18 17.500" /></G></TrayButton>
        <TrayButton aria-label="ネットワーク"><G w={20} h={20} sw={1.400}><path d="M1 19A18 18 0 0 1 19 1M6 19A13 13 0 0 1 19 6M11 19A8 8 0 0 1 19 11" /><circle cx="17.500" cy="17.500" r="1.500" fill="#fff" /></G></TrayButton>
        <TrayButton $w={60} aria-label="Windows Ink"><G w={22} h={21} sw={1.400}><path d="M8 15L16 1.500Q18.500 1 18 4L11 17L7.500 19ZM8 12Q0 13 1 18Q4 22 9 17M14 12Q20 10 21 13Q20 16 14 15" /></G></TrayButton>
        <TrayButton $w={58} aria-label="タッチキーボード"><G w={33} h={20} sw={1.600}><path d="M1 1H32V19H1Z" /><path d="M5 5.500H28M5 9.500H28" strokeDasharray="2 2" /><path d="M10 14.500H23" /></G></TrayButton>
        <TrayButton $w={38} aria-label="エラー">
          <svg width={22} height={22} viewBox="0 0 22 22"><circle cx="11" cy="11" r="11" fill="#a6a6a6" /><path d="M6.500 6.500L15.500 15.500M15.500 6.500L6.500 15.500" stroke="#151515" strokeWidth={2.500} /></svg>
        </TrayButton>
        <Clock>10:38<br />2017/02/24</Clock>
        <Notice aria-label="通知">
          <svg width={25} height={25} viewBox="0 0 25 25"><path d="M0 0H25V20H12L7 25V20H0Z" fill="#fff" /><path d="M5 5.500H20M5 10H20M5 14.500H14" stroke="#111" strokeWidth={1.500} /></svg>
          <Badge>14</Badge>
        </Notice>
      </Tray>
    </Taskbar>

    <Dialog role="dialog" aria-labelledby="crash-title">
      <DialogTitle id="crash-title">
        <FaultIcon size={24} />Adobe Acrobat DC
        <BareButton aria-label="ダイアログを閉じる"><CrossIcon s={17} w={1.300} /></BareButton>
      </DialogTitle>
      <DialogBody>
        <DialogHeading>Adobe Acrobat DC は動作を停止しました</DialogHeading>
        <DialogText>
          問題が発生したため、プログラムが正しく動作しなくなりました。プログラム<br />
          は閉じられ、解決策がある場合は Windows から通知されます。
        </DialogText>
      </DialogBody>
      <DialogFooter><EndButton>プログラムの終了(C)</EndButton></DialogFooter>
    </Dialog>
  </Desktop>
);

export default App;
